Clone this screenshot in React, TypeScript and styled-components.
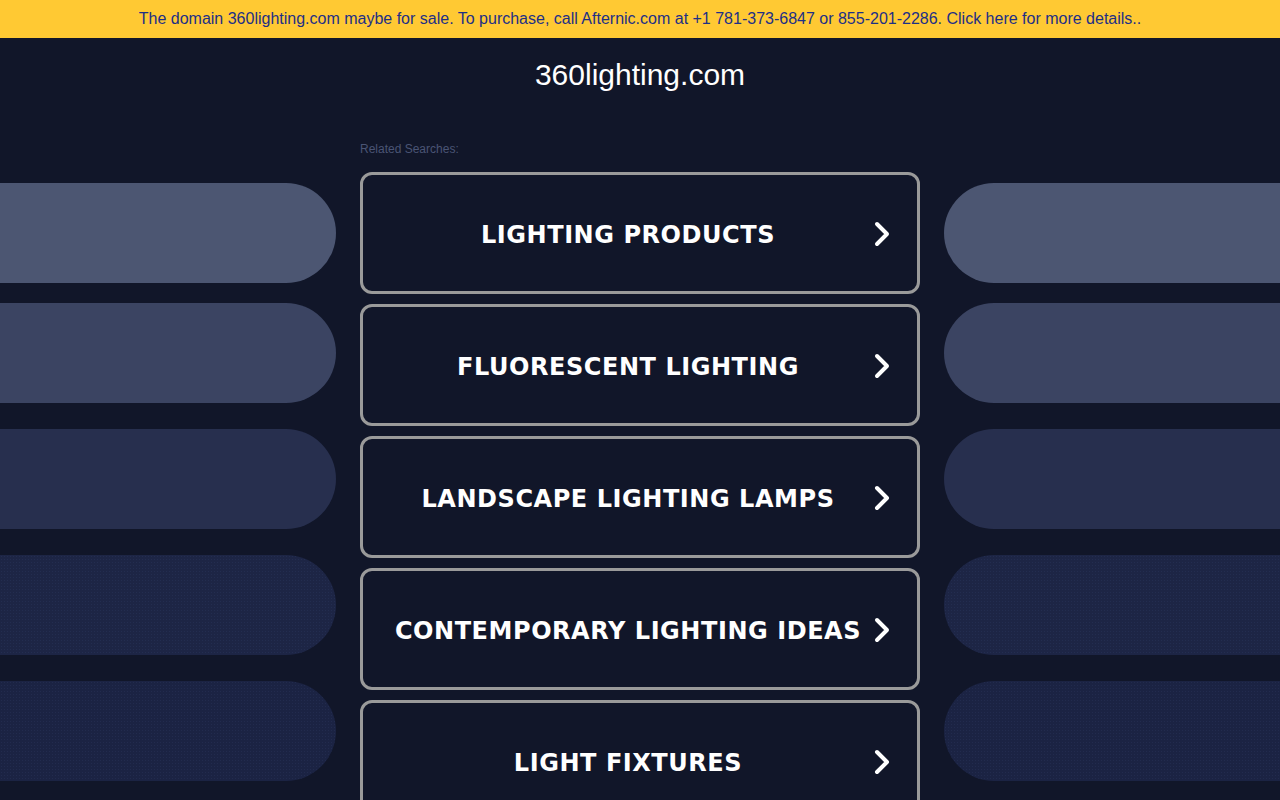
import styled, { createGlobalStyle } from "styled-components"

const GlobalStyle = createGlobalStyle`
  html, body {
    margin: 0;
    padding: 0;
    background-color: #111629;
    font-family: "Liberation Sans", Arial, sans-serif;
  }
`

const Page = styled.div`
  width: 1280px;
  height: 800px;
  overflow: hidden;
  background-color: #111629;
`

const SaleBanner = styled.div`
  height: 38px;
  line-height: 38px;
  background-color: #ffc933;
  color: #1d2f86;
  font-size: 16px;
  text-align: center;
  white-space: nowrap;
`

const Title = styled.h1`
  margin: 19px 0 0;
  font-size: 30px;
  line-height: 36px;
  font-weight: 400;
  color: #ffffff;
  text-align: center;
`

const Body = styled.div`
  display: flex;
  gap: 24px;
  margin-top: 49px;
`

const PillColumn = styled.div<{ $side: "left" | "right" }>`
  width: 336px;
  flex-shrink: 0;
  display: flex;
  flex-direction: column;
  padding-top: 41px;
  align-items: ${p => (p.$side === "left" ? "flex-end" : "flex-start")};
`

const Pill = styled.div<{ $side: "left" | "right"; $color: string; $top: number; $dotted?: boolean }>`
  width: 336px;
  height: 100px;
  flex-shrink: 0;
  margin-top: ${p => p.$top}px;
  background-color: ${p => p.$color};
  border-radius: ${p => (p.$side === "left" ? "0 50px 50px 0" : "50px 0 0 50px")};
  background-image: ${p =>
    p.$dotted ? "radial-gradient(rgba(70, 90, 140, 0.16) 0.6px, transparent 0.9px)" : "none"};
  background-size: 3px 3px;
`

const Center = styled.div`
  width: 560px;
  flex-shrink: 0;
  display: flex;
  flex-direction: column;
`

const RelatedLabel = styled.div`
  font-size: 12px;
  line-height: 14px;
  color: #4a5474;
  margin-bottom: 16px;
`

const LinkList = styled.div`
  display: flex;
  flex-direction: column;
  gap: 10px;
`

const SearchLink = styled.a`
  box-sizing: border-box;
  height: 122px;
  flex-shrink: 0;
  display: flex;
  align-items: center;
  padding: 0 25px 0 21px;
  border: 3px solid #9a9a9a;
  border-radius: 12px;
  text-decoration: none;
  cursor: pointer;
`

const LinkText = styled.span`
  flex: 1;
  padding-top: 4px;
  text-align: center;
  color: #ffffff;
  font-family: "DejaVu Sans", Verdana, sans-serif;
  font-weight: 700;
  font-size: 24px;
  letter-spacing: 0.55px;
  white-space: nowrap;
`

const Chevron = styled.svg`
  width: 20px;
  height: 28px;
  flex-shrink: 0;
  margin-top: 2px;
`

const pills = [
  { color: "#4c5672", top: 0 },
  { color: "#3b4462", top: 20 },
  { color: "#272f4e", top: 26 },
  { color: "#1d2545", top: 26, dotted: true },
  { color: "#1b2343", top: 26, dotted: true },
]

const searches = [
  "LIGHTING PRODUCTS",
  "FLUORESCENT LIGHTING",
  "LANDSCAPE LIGHTING LAMPS",
  "CONTEMPORARY LIGHTING IDEAS",
  "LIGHT FIXTURES",
]

const App = () => {
  return (
    <>
      <GlobalStyle />
      <Page>
        <SaleBanner>
          The domain 360lighting.com maybe for sale. To purchase, call Afternic.com at +1 781-373-6847 or 855-201-2286. Click here for more details..
        </SaleBanner>
        <Title>360lighting.com</Title>

        <Body>
          <PillColumn $side="left">
            {pills.map((pill, i) => (
              <Pill key={i} $side="left" $color={pill.color} $top={pill.top} $dotted={pill.dotted} />
            ))}
          </PillColumn>

          <Center>
            <RelatedLabel>Related Searches:</RelatedLabel>
            <LinkList>
              {searches.map(search => (
                <SearchLink key={search}>
                  <LinkText>{search}</LinkText>
                  <Chevron viewBox="0 0 20 28">
                    <polyline
                      points="5,4 15,14 5,24"
                      fill="none"
                      stroke="#ffffff"
                      strokeWidth="4"
                      strokeLinecap="round"
                      strokeLinejoin="round"
                    />
                  </Chevron>
                </SearchLink>
              ))}
            </LinkList>
          </Center>

          <PillColumn $side="right">
            {pills.map((pill, i) => (
              <Pill key={i} $side="right" $color={pill.color} $top={pill.top} $dotted={pill.dotted} />
            ))}
          </PillColumn>
        </Body>
      </Page>
    </>
  )
}

export default App
